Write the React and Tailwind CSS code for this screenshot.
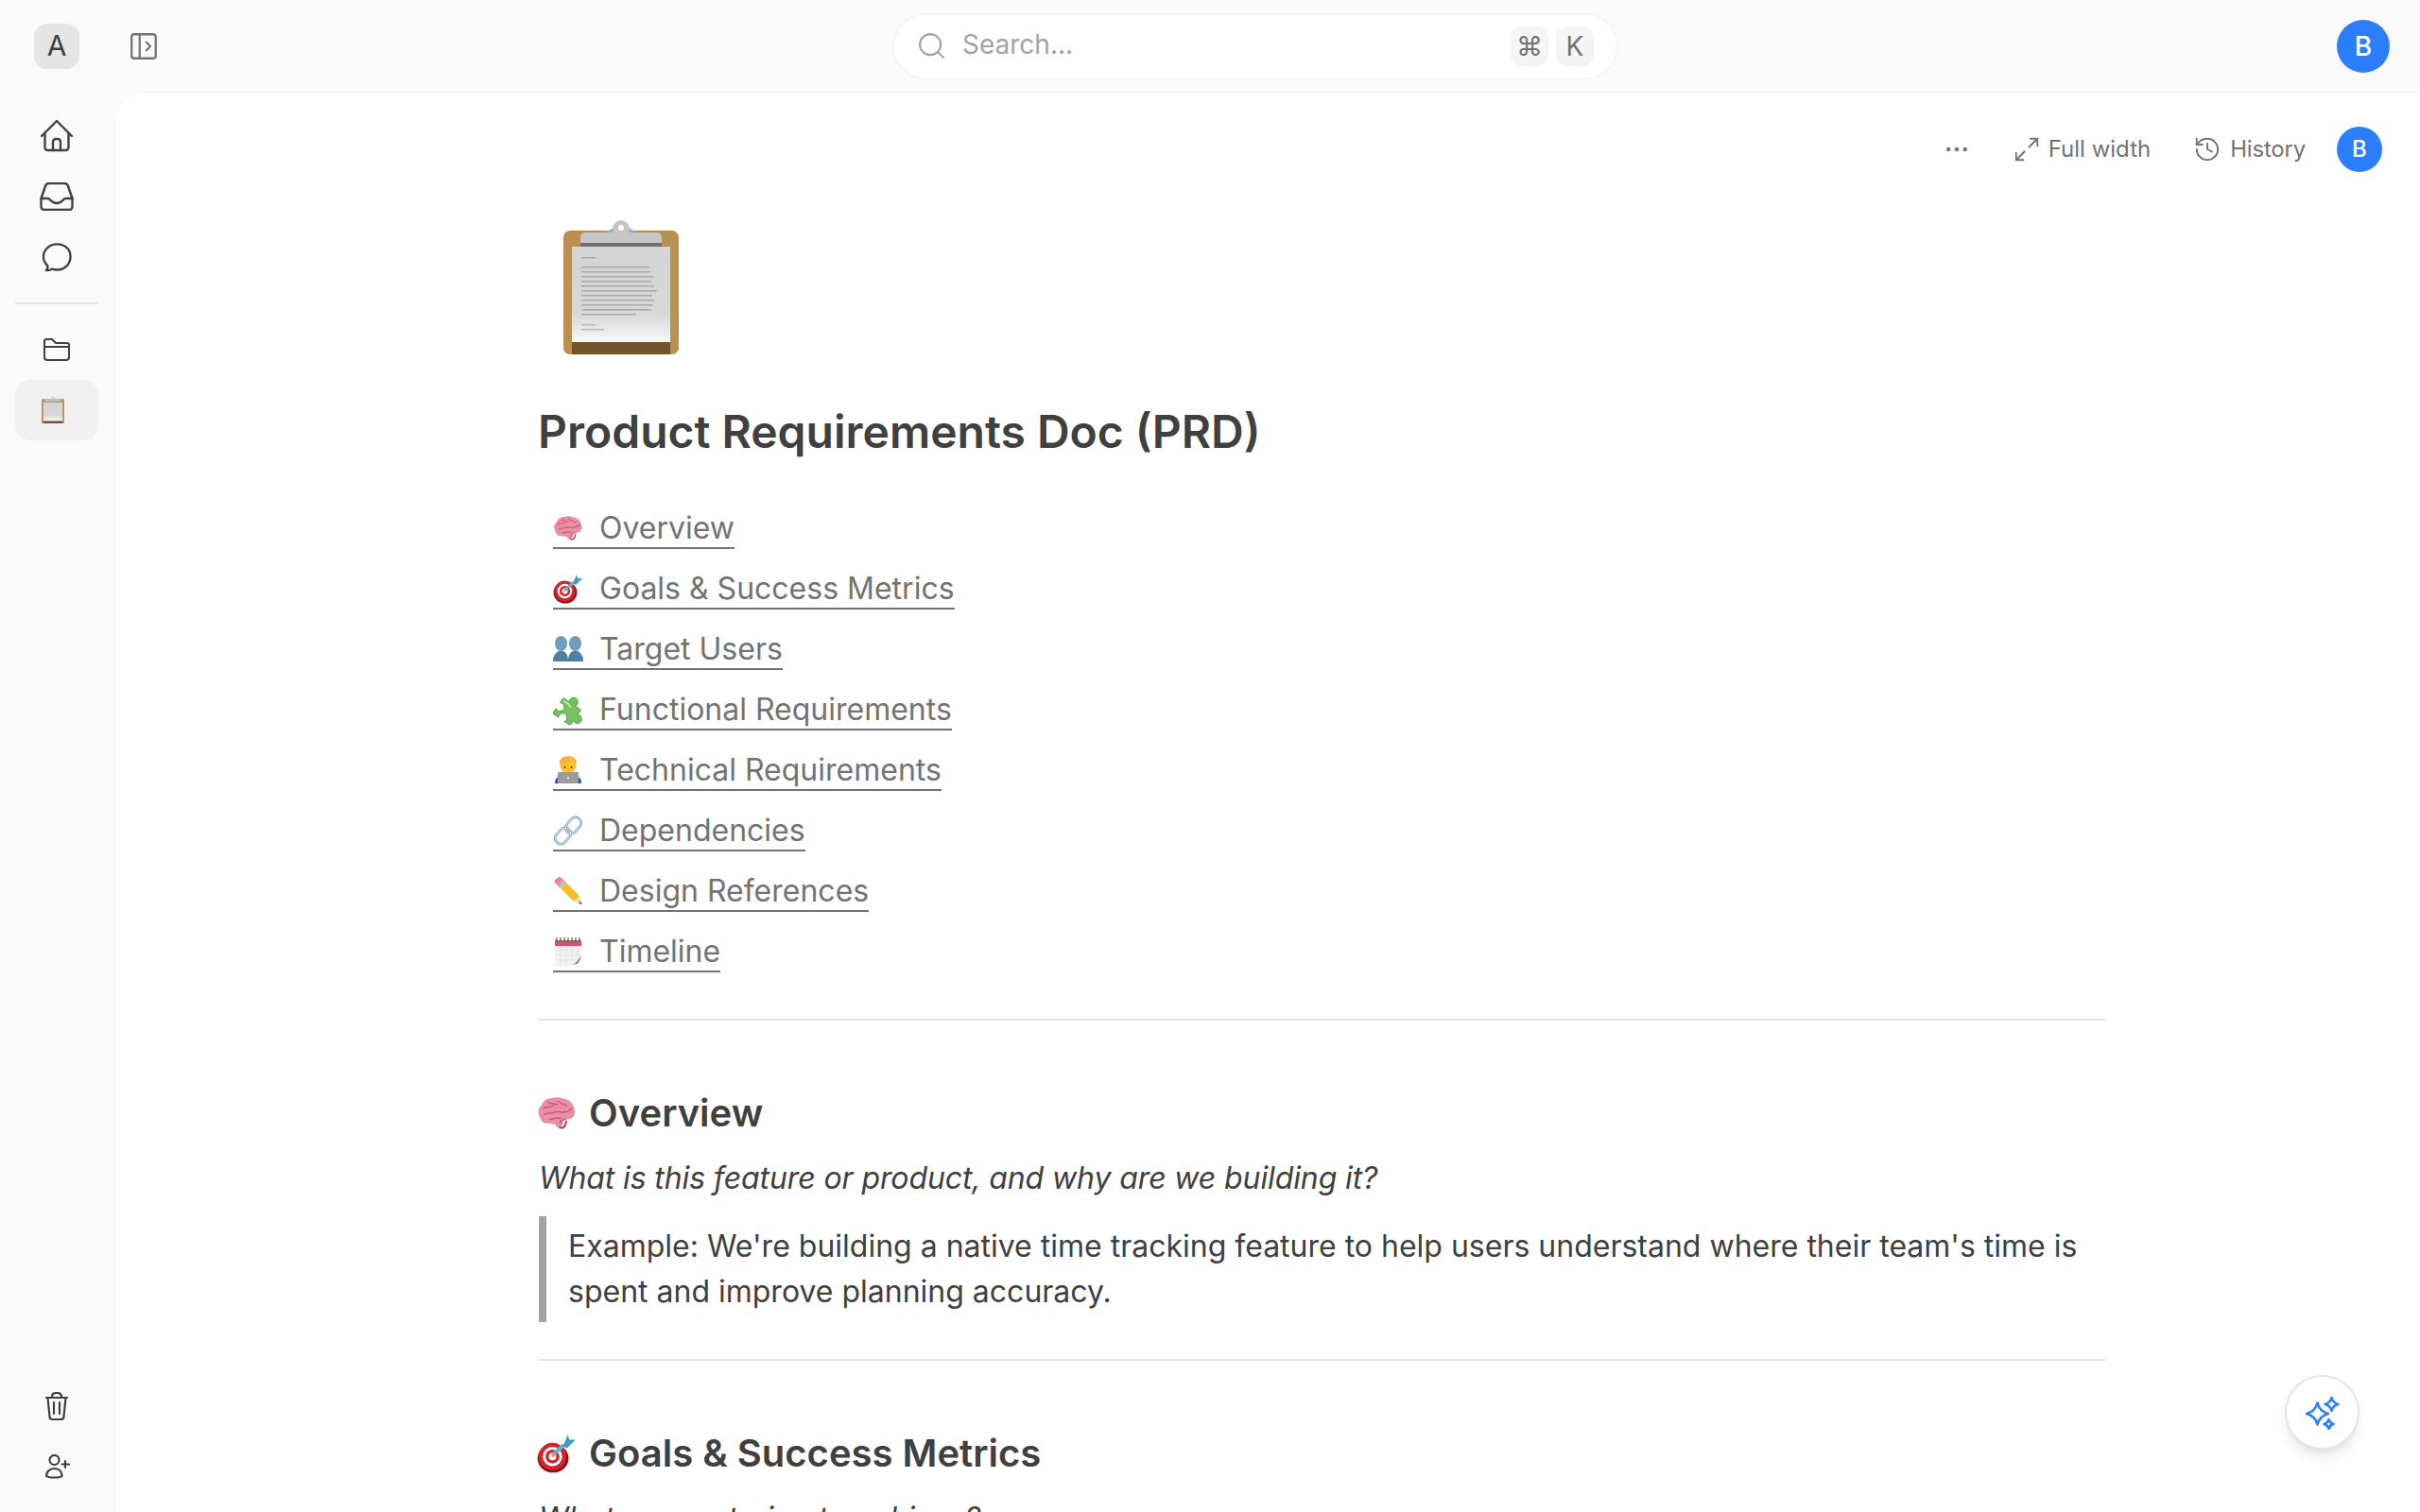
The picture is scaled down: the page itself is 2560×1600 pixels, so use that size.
import React from 'react';
import { PanelLeftOpen, Search, Maximize2, History, Ellipsis } from 'lucide-react';

const Brain = ({ className }) => (
  <svg className={className} viewBox="0 0 32 32">
    <path d="M1 15c0-3 2-4 3-6 1-3 4-5 8-5 2-1 6-1 8 0 4 0 9 3 10 8 1 3 1 6-2 8-2 1-4 1-6 1-1 2-1 5-3 6-2 1-4 0-4-2-3 0-4-1-6-1-3 1-6-1-8-9z" fill="#ea8ea6" />
    <path d="M5 12c3-2 5 0 8-2M9 7c2 2 5 1 7 2M17 6c1 3 5 2 7 4M6 17c3-2 6 0 9-2 3-1 5 1 8 0M22 15c2 0 4-1 6-3M10 21c3 0 6-2 9-1M19 24c0-2 2-3 4-3" fill="none" stroke="#c85a78" strokeWidth="1.1" strokeLinecap="round" />
    <path d="M18 27c1 1 3 1 4 0 1-1 1-3 2-5" fill="none" stroke="#a83c5a" strokeWidth="1.5" />
  </svg>
);

const Target = ({ className }) => (
  <svg className={className} viewBox="0 0 32 32">
    <ellipse cx="13" cy="20" rx="12.5" ry="11.5" fill="#8f1016" />
    <circle cx="12.5" cy="18.5" r="11" fill="#d9222a" />
    <circle cx="12.5" cy="18.5" r="7.8" fill="#fff" />
    <circle cx="12.5" cy="18.5" r="5.6" fill="#d9222a" />
    <circle cx="12.5" cy="18.5" r="3" fill="#fff" />
    <circle cx="13" cy="17.5" r="1.5" fill="#e8b020" />
    <path d="M13 17 L22 9" stroke="#5fb5d0" strokeWidth="3" />
    <path d="M21 10 L25 1 L26 5 L31 5 L24 12z" fill="#3f9cc0" />
  </svg>
);

const Users = ({ className }) => (
  <svg className={className} viewBox="0 0 32 32" fill="#6f9dbd">
    <ellipse cx="8.500" cy="10" rx="6.500" ry="8" />
    <ellipse cx="23.500" cy="10" rx="6.500" ry="8" />
    <path d="M0 29c0-7 3-9 6-11h5c3 2 5 4 5 11z" fill="#4f7fa3" />
    <path d="M16 29c0-7 2-9 5-11h5c3 2 6 4 6 11z" fill="#4f7fa3" />
  </svg>
);

const Puzzle = ({ className }) => (
  <svg className={className} viewBox="0 0 32 32">
    <g transform="translate(16 16) scale(1.25) rotate(35) translate(-16 -17)">
      <path d="M7 11h6a3.600 3.600 0 1 1 6 0h6v5a3.600 3.600 0 1 1 0 6v5h-6a3.600 3.600 0 1 0-6 0H7v-5a3.600 3.600 0 1 0 0-6z" fill="#76c261" stroke="#4f9c40" strokeWidth="0.7" />
      <path d="M9 13h5l2 1" fill="none" stroke="#b4e89c" strokeWidth="1.600" strokeLinecap="round" />
    </g>
  </svg>
);

const Technologist = ({ className }) => (
  <svg className={className} viewBox="0 0 32 32">
    <path d="M2 30c0-5 2-7 6-8h16c4 1 6 3 6 8z" fill="#2f55b5" />
    <circle cx="16" cy="11" r="8.500" fill="#fbc02d" />
    <path d="M7 10c-1-6 4-9 9-9s10 3 9 9c-2-3-4-4-6-3-4 1-8 0-12 3z" fill="#f2b33d" />
    <circle cx="12.500" cy="13" r="1" fill="#5b3a10" />
    <circle cx="19.500" cy="13" r="1" fill="#5b3a10" />
    <rect x="5" y="18" width="22" height="12" rx="1" fill="#9c9c9c" />
    <circle cx="16" cy="24" r="1.200" fill="#eee" />
  </svg>
);

const LinkEmoji = ({ className }) => (
  <svg className={className} viewBox="0 0 32 32" fill="none">
    <rect x="15.500" y="1" width="12" height="19" rx="6" transform="rotate(42 21.500 10.500)" stroke="#7d97ab" strokeWidth="2.600" />
    <rect x="4.500" y="12" width="12" height="19" rx="6" transform="rotate(42 10.500 21.500)" stroke="#7d97ab" strokeWidth="2.600" />
    <rect x="15.500" y="1" width="12" height="19" rx="6" transform="rotate(42 21.500 10.500)" stroke="#e3edf3" strokeWidth="1" />
    <rect x="4.500" y="12" width="12" height="19" rx="6" transform="rotate(42 10.500 21.500)" stroke="#e3edf3" strokeWidth="1" />
  </svg>
);

const Pencil = ({ className }) => (
  <svg className={className} viewBox="0 0 32 32">
    <path d="M6 1c1 0 2 0 3 1l4 4-6 6-5-5c-1-1-1-2 0-3z" fill="#e88598" />
    <path d="M7 6l6-1 1 2-6 6-2-1z" fill="#b9bcc0" />
    <path d="M8 13l6-6 14 14-6 6z" fill="#f7bd2c" />
    <path d="M22 27l6-6 3 9z" fill="#efd7b2" />
    <path d="M28.500 27l2.500 3-3.500-1z" fill="#333" />
  </svg>
);

const Calendar = ({ className }) => (
  <svg className={className} viewBox="0 0 32 32">
    <rect x="2" y="4" width="28" height="27" fill="#f2f2f2" />
    <rect x="2" y="4" width="28" height="6" fill="#d4546b" />
    <path d="M4 1v5M8 1v5M12 1v5M16 1v5M20 1v5M24 1v5M28 1v5" stroke="#555" strokeWidth="1.200" />
    <path d="M3 15h26M3 20h26M3 25h26M8 11v20M14 11v20M20 11v20M26 11v20" stroke="#dedede" strokeWidth="0.700" />
    <path d="M30 20v11H17c6-1 10-5 13-11z" fill="#fff" />
    <path d="M17 31c6-1 10-5 13-11-1 5-3 8-5 9z" fill="#6c6c6c" />
  </svg>
);

const paperLines = [72, 73, 76, 74, 77, 80, 75, 77, 76, 74, 58];

const Clipboard = ({ className, detail = true }) => (
  <svg className={className} viewBox="0 0 122 142">
    <defs>
      <linearGradient id="paperFade" x1="0" y1="0" x2="0" y2="1">
        <stop offset="0" stopColor="#d4d4d4" />
        <stop offset="0.7" stopColor="#d8d8d8" />
        <stop offset="1" stopColor="#f7f7f7" />
      </linearGradient>
    </defs>
    <rect x="0" y="11" width="122" height="131" rx="7" fill="#b98f52" />
    <rect x="9" y="128" width="104" height="14" fill="#74532a" />
    <path d="M44 13c3-1 5-4 8-4h18c3 0 5 3 8 4z" fill="#8db4d2" />
    <circle cx="61" cy="9" r="9" fill="#c4c4c4" />
    <circle cx="61" cy="8" r="3" fill="#fff" />
    <rect x="18" y="13" width="86" height="16" rx="5" fill="#c6c6c6" />
    <rect x="18" y="24" width="86" height="6" fill="#6e6e6e" />
    <rect x="9" y="28" width="104" height="101" fill="url(#paperFade)" />
    {detail && (
      <g fill="#a9a9a9">
        <rect x="19" y="39" width="15" height="1.500" />
        {paperLines.map((w, i) => (
          <rect key={i} x="19" y={49 + i * 5} width={w} height="1.500" />
        ))}
        <rect x="19" y="110" width="15" height="1.500" fill="#bbb" />
        <rect x="19" y="115" width="24" height="1.500" fill="#bbb" />
      </g>
    )}
  </svg>
);

const HomeIcon = ({ className }) => (
  <svg className={className} viewBox="0 0 34 34" fill="none" stroke="#404040" strokeWidth="2.400" strokeLinecap="round" strokeLinejoin="round">
    <path d="M1 17 L17 1 L33 17" />
    <path d="M4.500 14v15a3 3 0 0 0 3 3h19a3 3 0 0 0 3-3V14" />
    <path d="M13 32v-9a3 3 0 0 1 3-3h2a3 3 0 0 1 3 3v9" />
  </svg>
);

const InboxIcon = ({ className }) => (
  <svg className={className} viewBox="0 0 36 30" fill="none" stroke="#404040" strokeWidth="2.400" strokeLinecap="round" strokeLinejoin="round">
    <path d="M1.500 17 L6 4a4 4 0 0 1 4-3h16a4 4 0 0 1 4 3l4.500 13" />
    <path d="M1.500 17v9a3 3 0 0 0 3 3h27a3 3 0 0 0 3-3v-9h-7c-3 0-3 5-9.500 5s-6.500-5-9.500-5z" />
  </svg>
);

const MessageIcon = ({ className }) => (
  <svg className={className} viewBox="0 0 32 32" fill="none" stroke="#404040" strokeWidth="2.400" strokeLinejoin="round">
    <path d="M16.500 1.500C8.500 1.500 1.500 7 1.500 15c0 4 1.800 7.500 4.500 10 .5 2-.5 4-1.500 5 2.500.5 5-.5 6.500-1.500 1.600.5 3.500.9 5.500.9 8 0 14.500-6 14.500-14.400S24.500 1.500 16.500 1.500z" />
  </svg>
);

const FolderIcon = ({ className }) => (
  <svg className={className} viewBox="0 0 28 24" fill="none" stroke="#404040" strokeWidth="2" strokeLinejoin="round">
    <path d="M1 20V3a2 2 0 0 1 2-2h6l4 4h12a2 2 0 0 1 2 2v13a3 3 0 0 1-3 3H4a3 3 0 0 1-3-3z" />
    <path d="M1 9h26" />
  </svg>
);

const TrashIcon = ({ className }) => (
  <svg className={className} viewBox="0 0 24 30" fill="none" stroke="#404040" strokeWidth="2.200" strokeLinecap="round" strokeLinejoin="round">
    <path d="M1 6h22" />
    <path d="M7 5c0-3 2-4 5-4s5 1 5 4" />
    <path d="M2.500 6l2 20a3 3 0 0 0 3 3h9a3 3 0 0 0 3-3l2-20" />
    <path d="M9 11v12M15 11v12" />
  </svg>
);

const UserPlusIcon = ({ className }) => (
  <svg className={className} viewBox="0 0 26 26" fill="none" stroke="#404040" strokeWidth="2.200" strokeLinecap="round">
    <circle cx="9.500" cy="6" r="5" />
    <path d="M1 23c0-4 3-8 8.500-8s8 4 8 8c-2 2-14 2-16.500 0z" />
    <path d="M21 7v7M17.500 10.500h7.500" />
  </svg>
);

const star = (x, y, r) => {
  const k = r * 0.2;
  return `M${x} ${y - r}Q${x + k} ${y - k} ${x + r} ${y}Q${x + k} ${y + k} ${x} ${y + r}Q${x - k} ${y + k} ${x - r} ${y}Q${x - k} ${y - k} ${x} ${y - r}Z`;
};

const SparkleIcon = ({ className }) => (
  <svg className={className} viewBox="0 0 36 36" fill="none" stroke="#2b7fff" strokeWidth="2.600" strokeLinejoin="round">
    <path d={star(12.5, 19, 11.5)} />
    <path d={star(27.5, 9, 7)} />
    <path d={star(24.5, 30, 5)} />
  </svg>
);

const tocItems = [
  { Emoji: Brain, label: 'Overview' },
  { Emoji: Target, label: 'Goals & Success Metrics' },
  { Emoji: Users, label: 'Target Users' },
  { Emoji: Puzzle, label: 'Functional Requirements' },
  { Emoji: Technologist, label: 'Technical Requirements' },
  { Emoji: LinkEmoji, label: 'Dependencies' },
  { Emoji: Pencil, label: 'Design References' },
  { Emoji: Calendar, label: 'Timeline' },
];

function TopBar() {
  return (
    <div className="flex h-[97px] shrink-0 items-center pl-[36px] pr-[32px]">
      <div className="flex h-[48px] w-[48px] items-center justify-center rounded-[14px] bg-[#e5e5e5] text-[30px] text-[#404040]">A</div>
      <PanelLeftOpen className="ml-[51px] h-[34px] w-[34px] text-[#737373]" strokeWidth={1.6} />
      <div className="ml-[775px] flex h-[70px] w-[768px] items-center rounded-full border-2 border-[#f5f5f5] bg-white pl-[23px] pr-[24px]">
        <Search className="h-[33px] w-[33px] text-[#a3a3a3]" strokeWidth={1.5} />
        <span className="ml-[16px] flex-1 pb-[3px] text-[28px] text-[#a3a3a3]">Search...</span>
        <span className="flex h-[42px] w-[40px] items-center justify-center rounded-[12px] bg-[#f5f5f5] text-[28px] text-[#737373]">⌘</span>
        <span className="ml-[8px] flex h-[42px] w-[40px] items-center justify-center rounded-[12px] bg-[#f5f5f5] text-[28px] text-[#737373]">K</span>
      </div>
      <div className="ml-auto flex h-[56px] w-[56px] items-center justify-center rounded-full bg-[#2b7fff] text-[28px] font-medium text-white">B</div>
    </div>
  );
}

function Sidebar() {
  return (
    <div className="flex w-[121px] shrink-0 flex-col items-center justify-between pb-[35px] pr-[1px] pt-[30px]">
      <div className="flex flex-col items-center">
        <HomeIcon className="h-[34px] w-[34px]" />
        <InboxIcon className="mt-[32px] h-[30px] w-[36px]" />
        <MessageIcon className="mt-[34px] h-[31px] w-[32px]" />
        <div className="mt-[32px] h-[2px] w-[88px] bg-[#e5e5e5]" />
        <FolderIcon className="mt-[36px] h-[24px] w-[28px]" />
        <div className="mt-[20px] flex h-[64px] w-[88px] items-center rounded-[16px] bg-[#f0f0f0] pl-[28px]">
          <Clipboard className="h-[28px] w-[24px]" detail={false} />
        </div>
      </div>
      <div className="flex flex-col items-center">
        <TrashIcon className="h-[30px] w-[24px]" />
        <UserPlusIcon className="ml-[2px] mt-[36px] h-[26px] w-[26px]" />
      </div>
    </div>
  );
}

function DocToolbar() {
  return (
    <div className="flex items-center justify-end pr-[40px] pt-[36px] text-[24px] text-[#737373]">
      <Ellipsis className="h-[30px] w-[30px]" strokeWidth={1.6} />
      <Maximize2 className="ml-[44px] h-[30px] w-[30px]" strokeWidth={1.5} />
      <span className="ml-[8px]">Full width</span>
      <History className="ml-[45px] h-[30px] w-[30px]" strokeWidth={1.5} />
      <span className="ml-[9px] tracking-[-0.2px]">History</span>
      <div className="ml-[33px] flex h-[48px] w-[48px] items-center justify-center rounded-full bg-[#2b7fff] text-[24px] font-medium text-white">B</div>
    </div>
  );
}

function Document() {
  return (
    <div className="ml-[448px] w-[1657px]">
      <Clipboard className="ml-[26px] mt-[51px] h-[142px] w-[122px]" />
      <h1 className="-ml-[1px] mt-[52px] text-[48px] font-semibold leading-[60px] text-[#404040]">Product Requirements Doc (PRD)</h1>

      <ul className="mt-[52px] flex flex-col gap-[20px] pl-[15px]">
        {tocItems.map(({ Emoji, label }) => (
          <li key={label} className="flex h-[44px] items-start">
            <a className="flex h-[42px] items-center border-b-2 border-[#737373] text-[32px] text-[#737373]">
              <Emoji className="h-[32px] w-[32px]" />
              <span className="ml-[17px]">{label}</span>
            </a>
          </li>
        ))}
      </ul>

      <hr className="mt-[47px] h-[2px] border-0 bg-[#e5e5e5]" />

      <h2 className="mt-[73px] flex items-center text-[40px] font-semibold leading-[50px] text-[#404040]">
        <Brain className="-ml-[2px] h-[42px] w-[42px]" />
        <span className="ml-[13px]">Overview</span>
      </h2>
      <p className="mt-[20px] text-[32px] italic leading-[48px] tracking-[-0.11px] text-[#404040]">What is this feature or product, and why are we building it?</p>
      <blockquote className="mt-[16px] border-l-[8px] border-[#a3a3a3] py-[8px] pl-[23px] text-[32px] leading-[48px] text-[#404040]">
        Example: We're building a native time tracking feature to help users understand where their team's time is spent and improve planning accuracy.
      </blockquote>

      <hr className="mt-[39px] h-[2px] border-0 bg-[#e5e5e5]" />

      <h2 className="mt-[73px] flex items-center text-[40px] font-semibold leading-[50px] text-[#404040]">
        <Target className="-ml-[2px] h-[42px] w-[42px]" />
        <span className="ml-[13px]">Goals &amp; Success Metrics</span>
      </h2>
      <p className="mt-[20px] text-[32px] italic leading-[48px] tracking-[-0.11px] text-[#404040]">What are we trying to achieve?</p>
    </div>
  );
}

export default function App() {
  return (
    <div className="flex h-[1600px] w-[2560px] flex-col overflow-hidden bg-[#fafafa] font-[Inter,sans-serif]">
      <TopBar />
      <div className="flex min-h-0 flex-1">
        <Sidebar />
        <main className="relative min-w-0 flex-1 overflow-hidden rounded-tl-[32px] border-l border-t border-[#f5f5f5] bg-white">
          <DocToolbar />
          <Document />
          <button className="absolute bottom-[66px] right-[64px] flex h-[79px] w-[79px] items-center justify-center rounded-full border-2 border-[#e5e5e5] bg-white shadow-lg">
            <SparkleIcon className="h-[36px] w-[36px]" />
          </button>
        </main>
      </div>
    </div>
  );
}
